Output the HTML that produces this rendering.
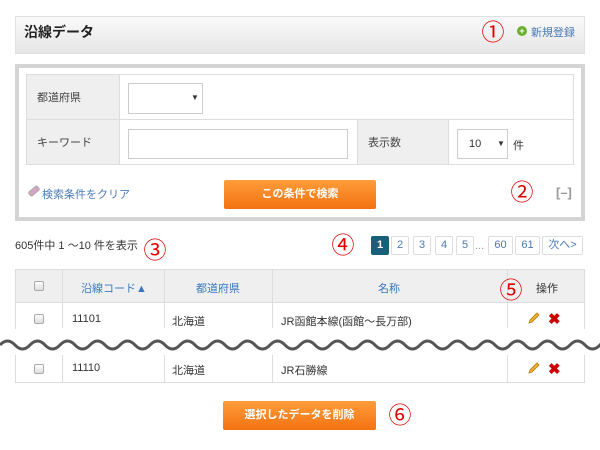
<!DOCTYPE html>
<html><head><meta charset="utf-8"><style>
*{box-sizing:border-box;margin:0;padding:0}
body{width:600px;height:450px;background:#fff;font-family:"Liberation Sans","Noto Sans CJK JP",sans-serif;font-size:11px;color:#333;position:relative;overflow:hidden}
.a{position:absolute}
.hdr{left:15px;top:16px;width:570px;height:38px;background:linear-gradient(#fafafa,#e6e6e6);border:1px solid #e0e0e0}
.num{font-size:23px;line-height:1;color:#e00000;width:24px;text-align:center}
.box{left:15px;top:64px;width:570px;height:157px;border:4px solid #d4d4d4}
.cell{border:1px solid #ddd}
.lbl{background:#efefef;color:#444;padding-left:10px;display:flex;align-items:center}
.sel{border:1px solid #ccc;background:#fff}
.btn{background:linear-gradient(#ff9c3a,#f47210);color:#fff;font-weight:bold;font-size:11px;text-align:center;border-radius:2px}
.pg{top:236px;height:19px;border:1px solid #ddd;color:#4a7ab5;font-size:11px;text-align:center;line-height:17px;border-radius:2px}
.th{background:#efefef;color:#3a78bd;text-align:center}
.cb{width:10px;height:10px;border:1px solid #aaa;border-radius:2px;background:linear-gradient(#fff,#ddd)}
.x{color:#c00;font-weight:bold;font-size:15px}
</style></head><body>
<div class="a hdr"></div>
<div class="a" style="left:24px;top:22px;font-size:14px;font-weight:bold;color:#222">沿線データ</div>
<div class="a num" style="left:481px;top:21px">①</div>
<div class="a" style="left:517px;top:26px;width:10px;height:10px;border-radius:50%;background:#6ab02f;color:#fff;font-size:9px;line-height:10px;text-align:center;font-weight:bold">+</div>
<div class="a" style="left:531px;top:24px;color:#4a7ab5;font-size:11px">新規登録</div>

<div class="a box"></div>
<div class="a cell" style="left:26px;top:74px;width:548px;height:91px"></div>
<div class="a lbl" style="left:27px;top:75px;width:92px;height:44px">都道府県</div>
<div class="a" style="left:27px;top:119px;width:546px;height:1px;background:#ddd"></div>
<div class="a lbl" style="left:27px;top:120px;width:92px;height:44px">キーワード</div>
<div class="a" style="left:119px;top:75px;width:1px;height:89px;background:#ddd"></div>
<div class="a sel" style="left:128px;top:83px;width:75px;height:31px"></div>
<div class="a" style="left:191px;top:93px;font-size:8px">▼</div>
<div class="a sel" style="left:128px;top:129px;width:220px;height:30px"></div>
<div class="a lbl" style="left:357px;top:120px;width:92px;height:44px;border-left:1px solid #ddd;border-right:1px solid #ddd">表示数</div>
<div class="a sel" style="left:457px;top:129px;width:51px;height:30px"></div>
<div class="a" style="left:469px;top:138px">10</div>
<div class="a" style="left:497px;top:139px;font-size:8px">▼</div>
<div class="a" style="left:513px;top:137px">件</div>
<div class="a" style="left:28px;top:188px;width:12px;height:6px;background:#d9a3c9;transform:rotate(-40deg);border:1px solid #aaa;border-radius:2px"></div>
<div class="a" style="left:42px;top:186px;color:#4a7ab5">検索条件をクリア</div>
<div class="a btn" style="left:224px;top:180px;width:152px;height:29px;line-height:29px">この条件で検索</div>
<div class="a num" style="left:510px;top:181px">②</div>
<div class="a" style="left:556px;top:185px;color:#999;font-size:13px;font-weight:bold">[–]</div>

<div class="a" style="left:15px;top:237px;font-size:11px">605件中 1 ～10 件を表示</div>
<div class="a num" style="left:143px;top:239px">③</div>
<div class="a num" style="left:331px;top:234px">④</div>
<div class="a pg" style="left:371px;width:18px;background:#1a5f7a;color:#fff;font-weight:bold;border-color:#1a5f7a">1</div>
<div class="a pg" style="left:391px;width:18px">2</div>
<div class="a pg" style="left:413px;width:18px">3</div>
<div class="a pg" style="left:435px;width:18px">4</div>
<div class="a pg" style="left:456px;width:18px">5</div>
<div class="a" style="left:475px;top:240px;color:#999">...</div>
<div class="a pg" style="left:488px;width:25px">60</div>
<div class="a pg" style="left:515px;width:25px">61</div>
<div class="a pg" style="left:542px;width:41px">次へ&gt;</div>

<div class="a" style="left:15px;top:269px;width:570px;height:60px;border:1px solid #ddd;border-bottom:none"></div>
<div class="a th" style="left:16px;top:270px;width:568px;height:33px;border-bottom:1px solid #ddd"></div>
<div class="a" style="left:62px;top:270px;width:1px;height:58px;background:#ddd"></div>
<div class="a" style="left:164px;top:270px;width:1px;height:58px;background:#ddd"></div>
<div class="a" style="left:272px;top:270px;width:1px;height:58px;background:#ddd"></div>
<div class="a" style="left:507px;top:270px;width:1px;height:58px;background:#ddd"></div>
<div class="a cb" style="left:34px;top:281px"></div>
<div class="a" style="left:81px;top:280px;color:#3a78bd">沿線コード▲</div>
<div class="a" style="left:196px;top:280px;color:#3a78bd">都道府県</div>
<div class="a" style="left:378px;top:280px;color:#3a78bd">名称</div>
<div class="a num" style="left:499px;top:279px">⑤</div>
<div class="a" style="left:536px;top:280px">操作</div>
<div class="a cb" style="left:34px;top:314px"></div>
<div class="a" style="left:72px;top:313px">11101</div>
<div class="a" style="left:172px;top:313px">北海道</div>
<div class="a" style="left:281px;top:313px">JR函館本線(函館～長万部)</div>
<svg class="a" style="left:527px;top:311px" width="14" height="14"><path d="M2 12 L3 9 L10 2 L12 4 L5 11 Z" fill="#f0b030" stroke="#b07a10" stroke-width="0.8"/></svg>
<div class="a x" style="left:548px;top:310px">✖</div>

<svg class="a" style="left:0;top:335px" width="600" height="20"><path d="M0 10 q7.5 -8 15 0 t15 0 t15 0 t15 0 t15 0 t15 0 t15 0 t15 0 t15 0 t15 0 t15 0 t15 0 t15 0 t15 0 t15 0 t15 0 t15 0 t15 0 t15 0 t15 0 t15 0 t15 0 t15 0 t15 0 t15 0 t15 0 t15 0 t15 0 t15 0 t15 0 t15 0 t15 0 t15 0 t15 0 t15 0 t15 0 t15 0 t15 0 t15 0 t15 0 t15 0" fill="none" stroke="#555" stroke-width="3"/></svg>

<div class="a" style="left:15px;top:355px;width:570px;height:28px;border:1px solid #ddd;border-top:none"></div>
<div class="a" style="left:62px;top:355px;width:1px;height:27px;background:#ddd"></div>
<div class="a" style="left:164px;top:355px;width:1px;height:27px;background:#ddd"></div>
<div class="a" style="left:272px;top:355px;width:1px;height:27px;background:#ddd"></div>
<div class="a" style="left:507px;top:355px;width:1px;height:27px;background:#ddd"></div>
<div class="a cb" style="left:34px;top:364px"></div>
<div class="a" style="left:72px;top:362px">11110</div>
<div class="a" style="left:172px;top:362px">北海道</div>
<div class="a" style="left:281px;top:362px">JR石勝線</div>
<svg class="a" style="left:527px;top:361px" width="14" height="14"><path d="M2 12 L3 9 L10 2 L12 4 L5 11 Z" fill="#f0b030" stroke="#b07a10" stroke-width="0.8"/></svg>
<div class="a x" style="left:548px;top:360px">✖</div>

<div class="a btn" style="left:223px;top:401px;width:153px;height:29px;line-height:29px">選択したデータを削除</div>
<div class="a num" style="left:388px;top:404px">⑥</div>
</body></html>
